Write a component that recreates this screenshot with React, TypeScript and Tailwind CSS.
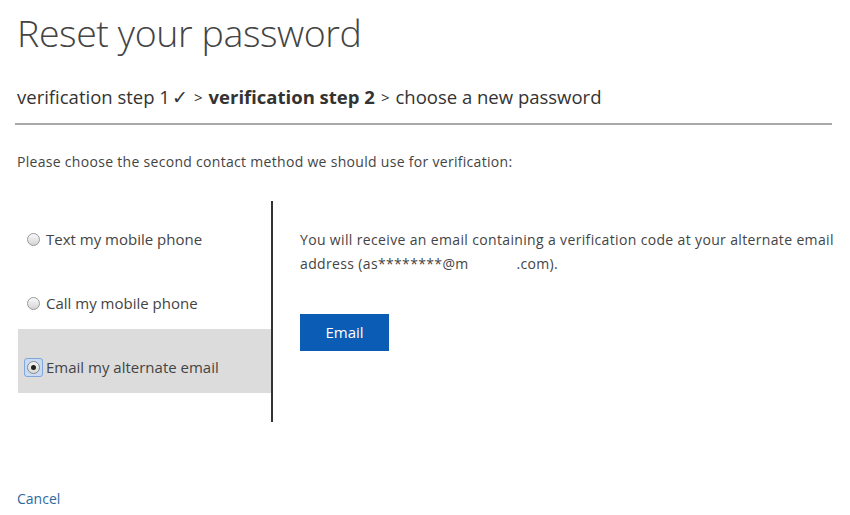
const OPTIONS = [
  { label: "Text my mobile phone", selected: false },
  { label: "Call my mobile phone", selected: false },
  { label: "Email my alternate email", selected: true },
];

const GAP = "\u00a0".repeat(12);

function Radio({ checked }: { checked: boolean }) {
  if (checked) {
    return (
      <span className="flex h-[19px] w-[19px] shrink-0 items-center justify-center rounded-[3px] border border-[#7ea6dc] bg-[#c9dbf3]">
        <span className="flex h-[13px] w-[13px] items-center justify-center rounded-full border border-[#8a8a8a] bg-gradient-to-b from-[#f4f4f4] to-[#d8d8d8]">
          <span className="h-[5px] w-[5px] rounded-full bg-[#222]" />
        </span>
      </span>
    );
  }
  return (
    <span className="ml-[3px] mr-[3px] h-[13px] w-[13px] shrink-0 rounded-full border border-[#9a9a9a] bg-gradient-to-b from-[#fafafa] to-[#d4d4d4]" />
  );
}

export default function App() {
  return (
    <div className="h-[515px] w-[850px] overflow-hidden bg-white pl-[17px] font-['Open_Sans',sans-serif] text-[#333]">
      {/* Title */}
      <h1 className="pt-[7px] text-[37.5px] font-light leading-[52px] tracking-[-0.4px] text-[#444]">
        Reset your password
      </h1>

      {/* Breadcrumb */}
      <div className="mt-[26px] flex items-center text-[18.5px] leading-[24px] text-[#333]">
        <span>verification step 1</span>
        <span className="ml-[2px]">✓</span>
        <span className="mx-[6px] text-[15px]">&gt;</span>
        <span className="font-bold">verification step 2</span>
        <span className="mx-[6px] text-[15px]">&gt;</span>
        <span>choose a new password</span>
      </div>
      <div className="ml-[-2px] mt-[14px] h-[2px] w-[817px] bg-[#a8a8a8]" />

      {/* Prompt */}
      <p className="mt-[28px] text-[14px] leading-[18px] tracking-[0.3px] text-[#444]">
        Please choose the second contact method we should use for verification:
      </p>

      {/* Methods */}
      <div className="mt-[30px] flex">
        <div className="ml-[1px] flex h-[221px] w-[255px] flex-col border-r-2 border-[#333]">
          {OPTIONS.map((o) => (
            <div
              key={o.label}
              className={`flex h-[64px] items-center pl-[6px] pt-[12px] text-[15px] ${
                o.selected ? "bg-[#dcdcdc]" : ""
              }`}
            >
              <Radio checked={o.selected} />
              <span className="ml-[3px] text-[#444]">{o.label}</span>
            </div>
          ))}
        </div>

        <div className="pl-[27px] pt-[27px]">
          <p className="w-[550px] text-[14px] leading-[24px] tracking-[0.35px] text-[#444]">
            {`You will receive an email containing a verification code at your alternate email address (as********@m${GAP}.com).`}
          </p>
          <button className="mt-[38px] h-[37px] w-[89px] bg-[#0b5cb4] text-[15px] text-white">
            Email
          </button>
        </div>
      </div>

      {/* Cancel */}
      <a className="mt-[68px] block text-[14px] leading-[18px] text-[#2c6aa0]">Cancel</a>
    </div>
  );
}
